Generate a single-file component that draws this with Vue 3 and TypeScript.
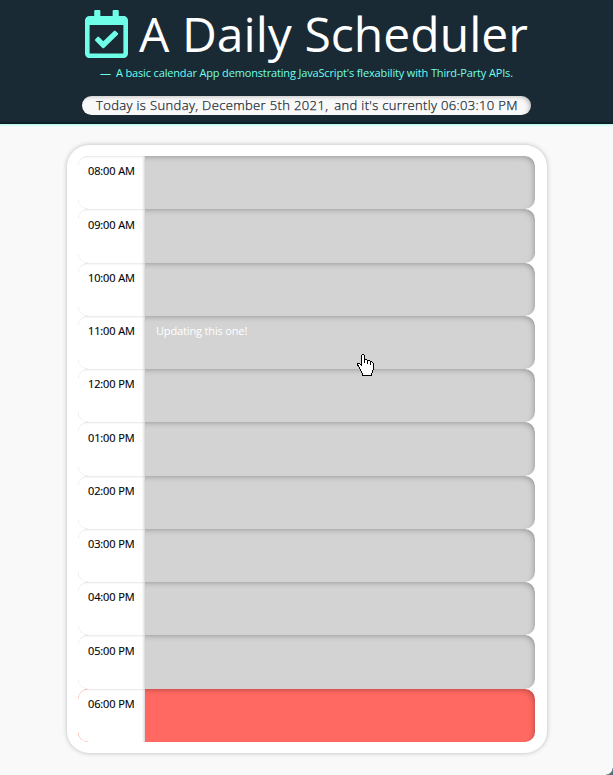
<script setup lang="ts">
interface Slot {
  time: string
  note: string
  state: 'past' | 'present'
}

const times: string[] = [
  '08:00 AM', '09:00 AM', '10:00 AM', '11:00 AM', '12:00 PM', '01:00 PM',
  '02:00 PM', '03:00 PM', '04:00 PM', '05:00 PM', '06:00 PM',
]

const slots: Slot[] = times.map((time) => ({
  time,
  note: time === '11:00 AM' ? 'Updating this one!' : '',
  state: time === '06:00 PM' ? 'present' : 'past',
}))
</script>

<template>
  <div class="page">
    <header class="header">
      <div class="brand">
        <svg class="logo" viewBox="0 0 448 512" preserveAspectRatio="none" aria-hidden="true">
          <path d="M400 64h-48V12c0-6.600-5.400-12-12-12h-40c-6.600 0-12 5.400-12 12v52H160V12c0-6.600-5.400-12-12-12h-40c-6.600 0-12 5.400-12 12v52H48C21.490 64 0 85.490 0 112v352c0 26.510 21.490 48 48 48h352c26.510 0 48-21.490 48-48V112c0-26.510-21.490-48-48-48zm-6 400H54a6 6 0 0 1-6-6V160h352v298a6 6 0 0 1-6 6zm-52.849-200.650L198.842 404.519c-4.705 4.667-12.303 4.637-16.971-.068l-75.091-75.699c-4.667-4.705-4.637-12.303.068-16.971l22.719-22.536c4.705-4.667 12.303-4.637 16.970.069l44.104 44.461 111.072-110.181c4.705-4.667 12.303-4.637 16.971.068l22.536 22.718c4.667 4.705 4.636 12.303-.069 16.970z" />
        </svg>
        <h1 class="title">A Daily Scheduler</h1>
      </div>
      <p class="tagline"><span class="dash">—</span><span class="tagtext">A basic calendar App demonstrating JavaScript's flexability with Third-Party APIs.</span></p>
      <div class="clock"><span class="date">Today is Sunday, December 5th 2021,</span><span class="now">and it's currently 06:03:10 PM</span></div>
    </header>
    <main class="card">
      <div v-for="slot in slots" :key="slot.time" class="slot" :class="slot.state">
        <div class="hour">{{ slot.time }}</div>
        <div class="note">{{ slot.note }}</div>
      </div>
    </main>
    <svg class="pointer" viewBox="0 0 17 22" shape-rendering="crispEdges" aria-hidden="true">
      <path fill="#000" d="M5 0h2v1h1v4h2v1h3v1h2v1h1v1h1v7h-1v3h-1v3H5v-3H4v-2H3v-2H2v-2H1v-1H0V9h3v1h1V1h1z" />
      <path fill="#fff" d="M5 1h2v8h1V6h2v4h1V7h2v4h1V8h1v1h1v7h-1v3h-1v2H6v-2H5v-2H4v-2H3v-2H2v-2H1v-1h2v1h1v1h1z" />
    </svg>
    <div class="corner"></div>
  </div>
</template>

<style>
body {
  background: #f9f9f9;
  overflow: hidden;
}
</style>

<style scoped>
.page {
  position: relative;
  box-sizing: border-box;
  height: 775px;
  overflow: hidden;
  background: #f9f9f9;
  font-family: "Open Sans", sans-serif;
}

.header {
  box-sizing: border-box;
  height: 124px;
  padding-top: 5px;
  display: flex;
  flex-direction: column;
  align-items: center;
  background: #192a35;
  box-shadow: inset 0 -3px 3px -2px #06161b, 0 1px 2px rgba(111, 255, 233, 0.6);
}

.brand {
  display: flex;
  align-items: flex-start;
  width: 443px;
  height: 59px;
}

.logo {
  flex: none;
  width: 43px;
  height: 48px;
  margin: 5px 11px 0 0;
  fill: #6fffe9;
}

.title {
  margin: 0;
  color: #fff;
  font-size: 48px;
  font-weight: 400;
  line-height: 58px;
  letter-spacing: 0.04px;
  white-space: nowrap;
}

.tagline {
  display: flex;
  gap: 5px;
  width: 413px;
  margin: 0;
  color: #6fffe9;
  font-size: 11px;
  line-height: 18px;
  white-space: nowrap;
}

.tagtext {
  letter-spacing: -0.155px;
}

.clock {
  box-sizing: border-box;
  display: flex;
  gap: 6px;
  width: 449px;
  height: 19px;
  margin-top: 14px;
  padding-left: 14px;
  border-radius: 10px;
  background: #f9f9f9;
  box-shadow: inset -3px 2px 5px -2px rgba(0, 0, 0, 0.3);
  color: #192a35;
  font-size: 13px;
  font-weight: 300;
  line-height: 18px;
  white-space: nowrap;
  -webkit-text-stroke: 0.25px #192a35;
}

.date {
  letter-spacing: 0.36px;
}

.now {
  letter-spacing: 0.34px;
}

.card {
  box-sizing: border-box;
  width: 480px;
  height: 608px;
  margin: 21px 0 0 67px;
  padding: 11px 12px 11px 11px;
  display: flex;
  flex-direction: column;
  border-radius: 22px;
  background: #fff;
  box-shadow: 0 0 5px rgba(0, 0, 0, 0.25);
}

.slot {
  flex: 1;
  display: flex;
  overflow: hidden;
  border-radius: 10px;
  background: #d3d3d3;
}

.hour {
  box-sizing: border-box;
  width: 67px;
  padding: 0.3px 0 0 10px;
  border-radius: 10px 0 0 10px;
  background: #fff;
  box-shadow: inset -2px 1px 3px -1px rgba(0, 0, 0, 0.2);
  color: #000;
  font-size: 11px;
  font-weight: 500;
  line-height: 30px;
  letter-spacing: -0.12px;
  white-space: nowrap;
  -webkit-text-stroke: 0.15px #000;
}

.note {
  flex: 1;
  padding-left: 11px;
  border-radius: 0 10px 10px 0;
  box-shadow: inset -3px 3px 6px -3px rgba(0, 0, 0, 0.34);
  color: #fff;
  font-size: 11px;
  line-height: 30px;
  letter-spacing: -0.15px;
}

.present {
  background: #ff6961;
}

.pointer {
  position: absolute;
  left: 357px;
  top: 354px;
  width: 17px;
  height: 22px;
}

.corner {
  position: absolute;
  right: 0;
  bottom: 0;
  width: 7px;
  height: 7px;
  background: radial-gradient(circle at 0 0, transparent 6px, #54717b 7px);
}
</style>
